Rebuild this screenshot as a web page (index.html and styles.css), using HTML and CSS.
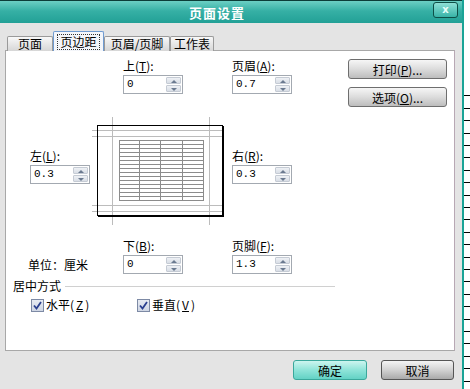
FILE: index.html
```html
<!DOCTYPE html>
<html lang="zh-CN">
<head>
    <meta charset="UTF-8">
    <title>页面设置</title>
    <link rel="stylesheet" href="styles.css">
</head>
<body>
<div class="screen">
    <div class="dialog">
        <div class="titlebar">
            <span class="title">页面设置</span>
            <span class="close">x</span>
        </div>
        <div class="dialog-body">
            <div class="tabs">
                <span class="tab">页面</span>
                <span class="tab active"><span class="focus">页边距</span></span>
                <span class="tab">页眉/页脚</span>
                <span class="tab">工作表</span>
            </div>
            <div class="panel">
                <div class="field f-top">
                    <label>上(<u>T</u>):</label>
                    <div class="spin"><span class="val">0</span><span class="arrows"><i class="up"></i><i class="down"></i></span></div>
                </div>
                <div class="field f-header">
                    <label>页眉(<u>A</u>):</label>
                    <div class="spin"><span class="val">0.7</span><span class="arrows"><i class="up"></i><i class="down"></i></span></div>
                </div>
                <div class="side-buttons">
                    <button class="btn">打印(<u>P</u>)...</button>
                    <button class="btn">选项(<u>O</u>)...</button>
                </div>

                <div class="field f-left">
                    <label>左(<u>L</u>):</label>
                    <div class="spin"><span class="val">0.3</span><span class="arrows"><i class="up"></i><i class="down"></i></span></div>
                </div>
                <svg class="preview" width="136" height="108" viewBox="0 0 136 108">
                    <!-- guide lines for header/footer and margins -->
                    <g stroke="#bcbcbc" stroke-width="1">
                        <line x1="22.5" y1="0" x2="22.5" y2="108"/>
                        <line x1="119.5" y1="0" x2="119.5" y2="108"/>
                        <line x1="2" y1="13.5" x2="134" y2="13.5"/>
                        <line x1="2" y1="19.5" x2="134" y2="19.5"/>
                        <line x1="2" y1="88.5" x2="134" y2="88.5"/>
                        <line x1="2" y1="94.5" x2="134" y2="94.5"/>
                    </g>
                    <!-- page -->
                    <rect x="7.5" y="8.5" width="125" height="90" fill="none" stroke="#000" stroke-width="1"/>
                    <line x1="133" y1="9" x2="133" y2="100" stroke="#000" stroke-width="2"/>
                    <line x1="8" y1="99" x2="134" y2="99" stroke="#000" stroke-width="2"/>
                    <!-- table -->
                    <g stroke="#8c8c8c" stroke-width="1" fill="none">
                        <rect x="29.5" y="23.5" width="84" height="60"/>
                        <line x1="49.5" y1="23.5" x2="49.5" y2="83.5"/>
                        <line x1="70.5" y1="23.5" x2="70.5" y2="83.5"/>
                        <line x1="92.5" y1="23.5" x2="92.5" y2="83.5"/>
                        <path d="M29.5 27.5H113.5M29.5 31.5H113.5M29.5 35.5H113.5M29.5 39.5H113.5M29.5 43.5H113.5M29.5 47.5H113.5M29.5 51.5H113.5M29.5 55.5H113.5M29.5 59.5H113.5M29.5 63.5H113.5M29.5 67.5H113.5M29.5 71.5H113.5M29.5 75.5H113.5M29.5 79.5H113.5"/>
                    </g>
                </svg>
                <div class="field f-right">
                    <label>右(<u>R</u>):</label>
                    <div class="spin"><span class="val">0.3</span><span class="arrows"><i class="up"></i><i class="down"></i></span></div>
                </div>

                <div class="unit">单位：厘米</div>
                <div class="field f-bottom">
                    <label>下(<u>B</u>):</label>
                    <div class="spin"><span class="val">0</span><span class="arrows"><i class="up"></i><i class="down"></i></span></div>
                </div>
                <div class="field f-footer">
                    <label>页脚(<u>F</u>):</label>
                    <div class="spin"><span class="val">1.3</span><span class="arrows"><i class="up"></i><i class="down"></i></span></div>
                </div>

                <div class="group">
                    <div class="group-title"><span>居中方式</span><span class="group-line"></span></div>
                    <div class="checks">
                        <span class="check-item">
                            <span class="checkbox"><svg width="11" height="11" viewBox="0 0 11 11"><path d="M2 5.5 L4.5 8.5 L9 2" fill="none" stroke="#2a3f8f" stroke-width="1.8"/></svg></span>
                            水平(<u>Z</u>)
                        </span>
                        <span class="check-item">
                            <span class="checkbox"><svg width="11" height="11" viewBox="0 0 11 11"><path d="M2 5.5 L4.5 8.5 L9 2" fill="none" stroke="#2a3f8f" stroke-width="1.8"/></svg></span>
                            垂直(<u>V</u>)
                        </span>
                    </div>
                </div>
            </div>
            <div class="footer">
                <button class="btn btn-ok">确定</button>
                <button class="btn btn-cancel">取消</button>
            </div>
        </div>
    </div>
    <div class="ruler"><div class="ticks"></div></div>
</div>
</body>
</html>
```

FILE: styles.css
```css
body {
    margin: 0;
    overflow: hidden;
    font-family: "Noto Sans CJK SC", "Noto Sans", sans-serif;
    font-size: 12px;
    color: #000;
}
.screen {
    display: flex;
    width: 470px;
    height: 389px;
}
.dialog {
    width: 462px;
    display: flex;
    flex-direction: column;
    background: #e4e4e4;
}
.titlebar {
    height: 23px;
    box-sizing: border-box;
    border-top: 1px solid #0c3d38;
    background: linear-gradient(#6ccfc4, #36b0a5 45%, #22a096);
    display: flex;
    align-items: center;
    padding-left: 189px;
    padding-right: 4px;
}
.title {
    color: #fff;
    font-weight: bold;
    font-size: 13px;
    letter-spacing: 1px;
    flex: 1;
}
.close {
    width: 23px;
    height: 14px;
    border: 1px solid #0e4f47;
    border-radius: 3px;
    background: linear-gradient(#8ee0d6, #38b3a7);
    color: #e8fffb;
    font-family: "DejaVu Sans", sans-serif;
    font-size: 10px;
    font-weight: bold;
    line-height: 13px;
    text-align: center;
    margin-top: -4px;
}
.dialog-body {
    flex: 1;
    padding: 9px 7px 0 5px;
}

/* tabs */
.tabs {
    display: flex;
    align-items: flex-end;
    height: 19px;
    padding-left: 2px;
    margin-bottom: -1px;
    position: relative;
}
.tab {
    height: 15px;
    box-sizing: border-box;
    border: 1px solid #9a9a9a;
    border-bottom: none;
    border-radius: 2px 2px 0 0;
    background: linear-gradient(#f8f8f8, #d6d6d6);
    line-height: 14px;
    text-align: center;
}
.tab:nth-child(1) { width: 46px; }
.tab:nth-child(2) { width: 51px; }
.tab:nth-child(3) { width: 66px; }
.tab:nth-child(4) { width: 44px; }
.tab.active {
    height: 20px;
    background: #f4f6fa;
    border-color: #6f9bd1;
    padding: 2px 3px 0;
}
.focus {
    display: block;
    border: 1px dotted #333;
    line-height: 14px;
}

/* tab page */
.panel {
    height: 301px;
    box-sizing: border-box;
    background: #fff;
    border: 1px solid #a8a8a8;
    border-right-color: #b8a8b4;
    padding-top: 8px;
    display: grid;
    grid-template-columns: 24px 60px 136px 6px 60px 56px 99px;
    grid-template-rows: auto auto auto auto;
    align-items: start;
    align-content: start;
}
.field label {
    display: block;
    height: 14px;
    line-height: 14px;
    margin-bottom: 2px;
    white-space: nowrap;
}
.spin {
    width: 60px;
    height: 19px;
    box-sizing: border-box;
    border: 1px solid #a3a9b1;
    display: flex;
    background: #fff;
}
.val {
    flex: 1;
    padding-left: 3px;
    font-family: "Liberation Mono", monospace;
    font-size: 11px;
    line-height: 17px;
}
.arrows {
    width: 15px;
    margin: 1px 1px 1px 0;
    display: flex;
    flex-direction: column;
    gap: 1px;
}
.arrows i {
    flex: 1;
    background: linear-gradient(#eef1f5, #d9dee6);
    border: 1px solid #c5cbd4;
    border-radius: 1px;
    position: relative;
}
.arrows i::after {
    content: "";
    position: absolute;
    left: 4px;
    top: 2px;
    border-left: 3px solid transparent;
    border-right: 3px solid transparent;
}
.arrows .up::after { border-bottom: 3px solid #6b7a90; }
.arrows .down::after { border-top: 3px solid #6b7a90; }

.f-top { grid-column: 3; grid-row: 1; margin-left: 33px; }
.f-header { grid-column: 5; grid-row: 1; }
.side-buttons {
    grid-column: 7;
    grid-row: 1 / span 2;
    display: flex;
    flex-direction: column;
    gap: 8px;
}
.f-left { grid-column: 2; grid-row: 2; margin-top: 55px; }
.preview { grid-column: 3; grid-row: 2; margin-top: 23px; display: block; }
.f-right { grid-column: 5; grid-row: 2; margin-top: 55px; }
.unit {
    grid-column: 2;
    grid-row: 3;
    align-self: end;
    margin-left: -2px;
    line-height: 19px;
    white-space: nowrap;
}
.f-bottom { grid-column: 3; grid-row: 3; margin-left: 33px; margin-top: 14px; }
.f-footer { grid-column: 5; grid-row: 3; margin-top: 14px; }

.group {
    grid-column: 1 / -1;
    grid-row: 4;
    margin: 5px 0 0 7px;
}
.group-title {
    display: flex;
    align-items: center;
    gap: 4px;
    line-height: 14px;
}
.group-line {
    width: 270px;
    border-top: 1px solid #d0d0d0;
}
.checks {
    display: flex;
    margin-top: 5px;
    padding-left: 18px;
}
.check-item {
    display: flex;
    align-items: center;
    gap: 2px;
    width: 106px;
    line-height: 14px;
}
.checkbox {
    width: 13px;
    height: 13px;
    box-sizing: border-box;
    border: 1px solid #7d8aa5;
    background: linear-gradient(#e6eaf2, #cfd6e4);
    display: flex;
    align-items: center;
    justify-content: center;
}

/* buttons */
.btn {
    font-family: inherit;
    font-size: 12px;
    color: #000;
    width: 99px;
    height: 20px;
    padding: 0;
    border: 1px solid #6e6e6e;
    border-radius: 3px;
    background: linear-gradient(#f6f6f6, #dcdcdc 50%, #bdbdbd);
    line-height: 17px;
}
.footer {
    display: flex;
    justify-content: flex-end;
    gap: 14px;
    margin-top: 9px;
    padding-right: 1px;
}
.btn-ok {
    width: 74px;
    border-color: #3aa79b;
    background: linear-gradient(#cdf5ef, #8fe4d9 50%, #63d2c5);
}
.btn-cancel {
    width: 73px;
    border-color: #555;
    background: linear-gradient(#f4f4f4, #d2d2d2 50%, #a9a9a9);
}

/* sheet row headers behind the dialog */
.ruler {
    flex: 1;
    border-left: 2px solid #1aa396;
    background: #fff;
    display: flex;
    flex-direction: column;
}
.ticks {
    flex: 1;
    margin-top: 88px;
    background: repeating-linear-gradient(to bottom, transparent 0 11.4px, #000 11.4px 12.4px);
    background-position: 0 -4px;
}
```
